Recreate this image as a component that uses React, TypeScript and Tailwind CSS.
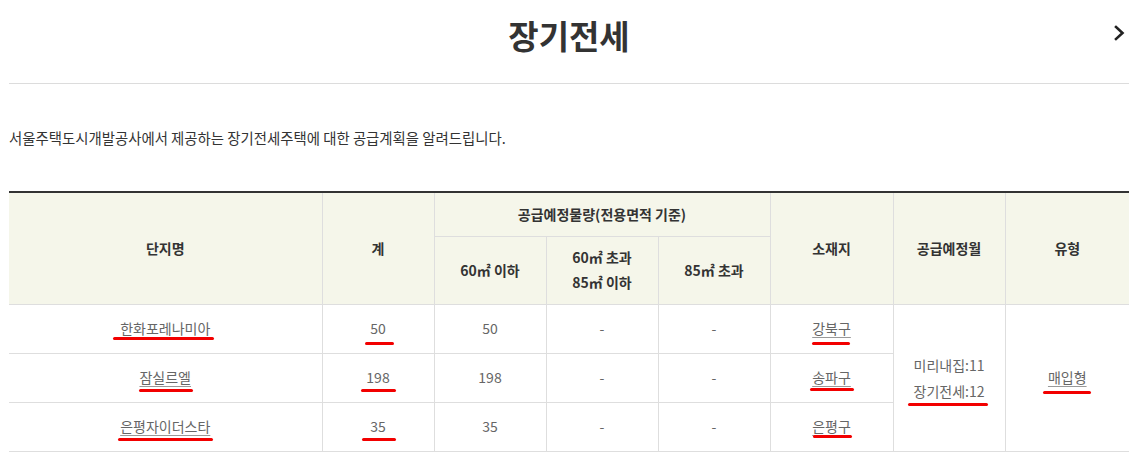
import React from "react";

const font = { fontFamily: '"Noto Sans CJK KR", "Noto Sans", sans-serif' };

interface Row {
  name: string;
  total: string;
  small: string;
  mid: string;
  large: string;
  place: string;
}

const rows: Row[] = [
  { name: "한화포레나미아", total: "50", small: "50", mid: "-", large: "-", place: "강북구" },
  { name: "잠실르엘", total: "198", small: "198", mid: "-", large: "-", place: "송파구" },
  { name: "은평자이더스타", total: "35", small: "35", mid: "-", large: "-", place: "은평구" },
];

// hand-drawn red marks over the screenshot: [left, top, width]
const marks: [number, number, number][] = [
  [113, 337, 101],
  [365, 342, 29],
  [139, 389, 54],
  [361, 389, 35],
  [118, 438, 95],
  [362, 438, 34],
  [812, 342, 38],
  [810, 388, 44],
  [813, 435, 39],
  [908, 403, 80],
  [1043, 391, 48],
];

const th = "border border-[#dedede] font-bold text-[14px] text-[#333] text-center align-middle";
const td = "border border-[#dedede] text-[14px] text-[#666] text-center align-middle";

const App: React.FC = () => {
  return (
    <div className="relative w-[1139px] h-[461px] bg-white overflow-hidden" style={font}>
      <div className="mx-[9px] w-[1120px]">
        {/* Title */}
        <div className="relative h-[84px] border-b border-[#dcdcdc] flex items-start justify-center">
          <h2 className="mt-[11px] text-[33px] leading-[48px] font-bold text-[#333]">장기전세</h2>
          <svg
            className="absolute right-[4px] top-[25px]"
            width="11"
            height="16"
            viewBox="0 0 11 16"
            fill="none"
          >
            <path d="M2 2 L8.5 8 L2 14" stroke="#222" strokeWidth="2.6" strokeLinecap="square" />
          </svg>
        </div>

        {/* Description */}
        <p className="mt-[44px] text-[14.4px] leading-[20px] text-[#333]">
          서울주택도시개발공사에서 제공하는 장기전세주택에 대한 공급계획을 알려드립니다.
        </p>

        {/* Table */}
        <table className="mt-[43px] w-[1120px] border-collapse table-fixed border-t-2 border-t-[#333] border-b border-b-[#aaa]">
          <colgroup>
            <col className="w-[313px]" />
            <col className="w-[112px]" />
            <col className="w-[112px]" />
            <col className="w-[112px]" />
            <col className="w-[112px]" />
            <col className="w-[123px]" />
            <col className="w-[112px]" />
            <col className="w-[124px]" />
          </colgroup>
          <thead className="bg-[#f5f6ea]">
            <tr className="h-[44px]">
              <th rowSpan={2} className={`${th} border-l-0 border-t-0`}>단지명</th>
              <th rowSpan={2} className={`${th} border-t-0`}>계</th>
              <th colSpan={3} className={`${th} border-t-0`}>공급예정물량(전용면적 기준)</th>
              <th rowSpan={2} className={`${th} border-t-0`}>소재지</th>
              <th rowSpan={2} className={`${th} border-t-0`}>공급예정월</th>
              <th rowSpan={2} className={`${th} border-r-0 border-t-0`}>유형</th>
            </tr>
            <tr className="h-[68px]">
              <th className={th}>60㎡ 이하</th>
              <th className={`${th} leading-[25px]`}>
                60㎡ 초과
                <br />
                85㎡ 이하
              </th>
              <th className={th}>85㎡ 초과</th>
            </tr>
          </thead>
          <tbody>
            {rows.map((r, i) => (
              <tr key={r.name} className="h-[49px]">
                <td className={`${td} border-l-0`}>
                  <span className="underline underline-offset-[3px] decoration-[#999]">{r.name}</span>
                </td>
                <td className={td}>{r.total}</td>
                <td className={td}>{r.small}</td>
                <td className={td}>{r.mid}</td>
                <td className={td}>{r.large}</td>
                <td className={td}>
                  <span className="underline underline-offset-[3px] decoration-[#999]">{r.place}</span>
                </td>
                {i === 0 && (
                  <>
                    <td rowSpan={3} className={`${td} leading-[26px]`}>
                      미리내집:11
                      <br />
                      장기전세:12
                    </td>
                    <td rowSpan={3} className={`${td} border-r-0`}>
                      <span className="underline underline-offset-[3px] decoration-[#999]">매입형</span>
                    </td>
                  </>
                )}
              </tr>
            ))}
          </tbody>
        </table>
      </div>

      {/* red annotation strokes */}
      {marks.map(([l, t, w], i) => (
        <span
          key={i}
          className="absolute h-[3px] rounded-full bg-[#f20000]"
          style={{ left: l, top: t, width: w }}
        />
      ))}
    </div>
  );
};

export default App;
